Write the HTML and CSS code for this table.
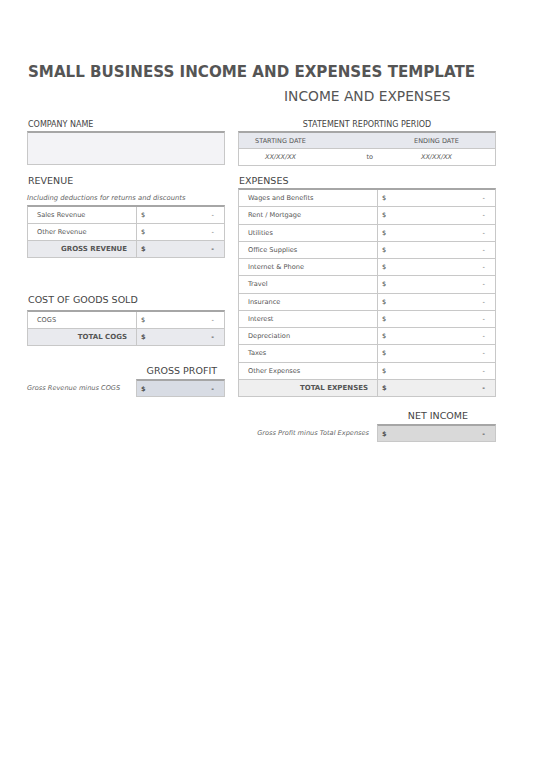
FILE: index.html
```html
<!DOCTYPE html>
<html>
<head>
<meta charset="utf-8">
<link rel="stylesheet" href="styles.css">
</head>
<body>
<div class="page">
  <h1 class="title">SMALL BUSINESS INCOME AND EXPENSES TEMPLATE</h1>
  <div class="subtitle">INCOME AND EXPENSES</div>

  <div class="cols">
    <div class="col left">
      <div class="label">COMPANY NAME</div>
      <div class="company-box"></div>

      <div class="heading rev-heading">REVENUE</div>
      <div class="note">Including deductions for returns and discounts</div>
      <div class="tbl rev">
        <div class="row"><div class="c-name">Sales Revenue</div><div class="c-val"><span>$</span><span>-</span></div></div>
        <div class="row"><div class="c-name">Other Revenue</div><div class="c-val"><span>$</span><span>-</span></div></div>
        <div class="row total"><div class="c-name">GROSS REVENUE</div><div class="c-val"><span>$</span><span>-</span></div></div>
      </div>

      <div class="heading cogs-heading">COST OF GOODS SOLD</div>
      <div class="tbl cogs">
        <div class="row"><div class="c-name">COGS</div><div class="c-val"><span>$</span><span>-</span></div></div>
        <div class="row total"><div class="c-name">TOTAL COGS</div><div class="c-val"><span>$</span><span>-</span></div></div>
      </div>

      <div class="big-label gp-label">GROSS PROFIT</div>
      <div class="result-row">
        <div class="result-note">Gross Revenue minus COGS</div>
        <div class="result-box gp-box"><span>$</span><span>-</span></div>
      </div>
    </div>

    <div class="col right">
      <div class="label center">STATEMENT REPORTING PERIOD</div>
      <div class="period">
        <div class="p-row p-head"><span>STARTING DATE</span><span></span><span>ENDING DATE</span></div>
        <div class="p-row p-dates"><span class="date">XX/XX/XX</span><span class="to">to</span><span class="date">XX/XX/XX</span></div>
      </div>

      <div class="heading exp-heading">EXPENSES</div>
      <div class="tbl exp">
        <div class="row"><div class="c-name">Wages and Benefits</div><div class="c-val"><span>$</span><span>-</span></div></div>
        <div class="row"><div class="c-name">Rent / Mortgage</div><div class="c-val"><span>$</span><span>-</span></div></div>
        <div class="row"><div class="c-name">Utilities</div><div class="c-val"><span>$</span><span>-</span></div></div>
        <div class="row"><div class="c-name">Office Supplies</div><div class="c-val"><span>$</span><span>-</span></div></div>
        <div class="row"><div class="c-name">Internet &amp; Phone</div><div class="c-val"><span>$</span><span>-</span></div></div>
        <div class="row"><div class="c-name">Travel</div><div class="c-val"><span>$</span><span>-</span></div></div>
        <div class="row"><div class="c-name">Insurance</div><div class="c-val"><span>$</span><span>-</span></div></div>
        <div class="row"><div class="c-name">Interest</div><div class="c-val"><span>$</span><span>-</span></div></div>
        <div class="row"><div class="c-name">Depreciation</div><div class="c-val"><span>$</span><span>-</span></div></div>
        <div class="row"><div class="c-name">Taxes</div><div class="c-val"><span>$</span><span>-</span></div></div>
        <div class="row"><div class="c-name">Other Expenses</div><div class="c-val"><span>$</span><span>-</span></div></div>
        <div class="row total"><div class="c-name">TOTAL EXPENSES</div><div class="c-val"><span>$</span><span>-</span></div></div>
      </div>

      <div class="big-label ni-label">NET INCOME</div>
      <div class="result-row">
        <div class="result-note">Gross Profit minus Total Expenses</div>
        <div class="result-box ni-box"><span>$</span><span>-</span></div>
      </div>
    </div>
  </div>
</div>
</body>
</html>
```

FILE: styles.css
```css
* { box-sizing: border-box; }
html, body { margin: 0; padding: 0; background: #fff; }
body {
  font-family: "DejaVu Sans", sans-serif;
  color: #505050;
  width: 550px;
  height: 777px;
}
.page {
  padding: 63px 0 0 27px;
  width: 550px;
}
.title {
  margin: 0 0 0 1px;
  font-size: 15.1px;
  line-height: 18px;
  font-weight: bold;
  color: #555;
}
.subtitle {
  margin: 7px 0 0 257px;
  font-size: 13.8px;
  line-height: 16px;
  color: #555;
}
.cols {
  display: flex;
  gap: 13px;
  margin-top: 16px;
}
.col { display: flex; flex-direction: column; }
.left { width: 198px; }
.right { width: 258px; }

.label {
  font-size: 8px;
  line-height: 10px;
  height: 10px;
  margin-left: 1px;
  color: #444;
}
.label.center { text-align: center; margin-left: 0; }

.company-box {
  margin-top: 1px;
  height: 34px;
  background: #f3f3f6;
  border: 1px solid #c8c8c8;
  border-top: 2px solid #a6a6a6;
}

.period {
  margin-top: 1px;
  border: 1px solid #c8c8c8;
  border-top: 2px solid #a6a6a6;
}
.p-row {
  display: grid;
  grid-template-columns: 83px 56px 1fr;
  height: 16px;
  align-items: center;
  font-size: 6.5px;
  color: #555;
  text-align: center;
}
.p-head { background: #e6e8ee; border-bottom: 1px solid #c8c8c8; }
.date { font-style: italic; }
.to { text-align: right; padding-right: 5px; }

.heading {
  font-size: 9.5px;
  line-height: 12px;
  height: 12px;
  margin-left: 1px;
  color: #444;
}
.rev-heading { margin-top: 10px; }
.exp-heading { margin-top: 9px; }
.cogs-heading { margin-top: 36px; }

.note {
  font-size: 6.8px;
  line-height: 10px;
  height: 10px;
  margin-top: 6px;
  font-style: italic;
  color: #666;
}

.tbl {
  display: grid;
  grid-auto-rows: 17px;
  border-top: 2px solid #a6a6a6;
  border-left: 1px solid #c8c8c8;
  border-right: 1px solid #c8c8c8;
}
.rev { margin-top: 2px; }
.cogs { margin-top: 4px; }
.exp { margin-top: 1px; grid-auto-rows: 17.25px; }
.row {
  display: grid;
  grid-template-columns: 109px 1fr;
  border-bottom: 1px solid #c8c8c8;
  font-size: 6.6px;
  color: #555;
}
.exp .row { grid-template-columns: 139px 1fr; }
.c-name {
  display: flex;
  align-items: center;
  padding-left: 9px;
  border-right: 1px solid #c8c8c8;
}
.c-val {
  display: flex;
  align-items: center;
  justify-content: space-between;
  padding: 0 10px 0 4px;
}
.row.total { background: #e9eaee; }
.exp .row.total { background: #efefef; }
.row.total .c-name {
  justify-content: flex-end;
  padding-right: 9px;
  font-weight: bold;
  font-size: 7px;
}
.row.total .c-val { font-weight: bold; }

.big-label {
  font-size: 9.5px;
  line-height: 12px;
  height: 12px;
  color: #444;
}
.gp-label { margin-top: 19px; text-align: right; padding-right: 8px; }
.ni-label { margin-top: 13px; text-align: right; padding-right: 28px; }

.result-row {
  display: flex;
  align-items: center;
  justify-content: flex-end;
  margin-top: 2px;
}
.result-note {
  flex: 1;
  font-size: 6.6px;
  font-style: italic;
  color: #666;
}
.right .result-note { text-align: right; padding-right: 8px; }
.result-box {
  display: flex;
  align-items: center;
  justify-content: space-between;
  height: 18px;
  border-top: 2px solid #a6a6a6;
  border-bottom: 1px solid #c8c8c8;
  border-left: 1px solid #c8c8c8;
  border-right: 1px solid #c8c8c8;
  padding: 0 10px 0 4px;
  font-size: 6.5px;
  font-weight: bold;
}
.gp-box { width: 89px; background: #d8dce4; }
.ni-box { width: 119px; background: #d9d9d9; }
```
